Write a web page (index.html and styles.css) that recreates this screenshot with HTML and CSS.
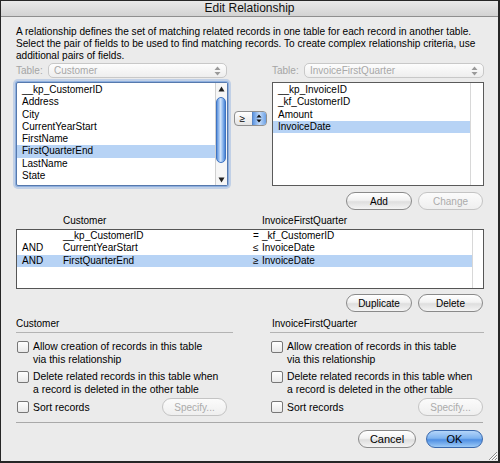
FILE: index.html
```html
<!DOCTYPE html>
<html>
<head>
<meta charset="utf-8">
<title>Edit Relationship</title>
<link rel="stylesheet" href="styles.css">
</head>
<body>
<div class="window">
  <div class="titlebar">Edit Relationship</div>
  <div class="content">
    <p class="intro">A relationship defines the set of matching related records in one table for each record in another table.<br>Select the pair of fields to be used to find matching records. To create complex relationship criteria, use<br>additional pairs of fields.</p>

    <div class="pickers">
      <div class="table-field">
        <span class="label">Table:</span>
        <div class="popup"><span>Customer</span>
          <svg class="updown" width="7" height="10" viewBox="0 0 7 10"><path d="M0.5 4 L3.5 0.5 L6.5 4 Z M0.5 6 L3.5 9.5 L6.5 6 Z" fill="#9a9a9a"/></svg>
        </div>
      </div>
      <div></div>
      <div class="table-field">
        <span class="label">Table:</span>
        <div class="popup wide"><span>InvoiceFirstQuarter</span>
          <svg class="updown" width="7" height="10" viewBox="0 0 7 10"><path d="M0.5 4 L3.5 0.5 L6.5 4 Z M0.5 6 L3.5 9.5 L6.5 6 Z" fill="#9a9a9a"/></svg>
        </div>
      </div>

      <div class="list focused">
        <ul class="items">
          <li>__kp_CustomerID</li>
          <li>Address</li>
          <li>City</li>
          <li>CurrentYearStart</li>
          <li>FirstName</li>
          <li class="sel">FirstQuarterEnd</li>
          <li>LastName</li>
          <li>State</li>
        </ul>
        <div class="scrollbar">
          <div class="sb-arrow"><svg width="7" height="6" viewBox="0 0 7 6"><path d="M0.5 5.5 L3.5 0.5 L6.5 5.5 Z" fill="#222"/></svg></div>
          <div class="sb-track"><div class="sb-thumb"></div></div>
          <div class="sb-arrow"><svg width="7" height="6" viewBox="0 0 7 6"><path d="M0.5 0.5 L3.5 5.5 L6.5 0.5 Z" fill="#222"/></svg></div>
        </div>
      </div>

      <div class="op-cell">
        <div class="op-popup">
          <span class="op">≥</span>
          <span class="op-stepper"><svg width="6" height="9" viewBox="0 0 6 9"><path d="M0.5 3.5 L3 0.5 L5.5 3.5 Z M0.5 5.5 L3 8.5 L5.5 5.5 Z" fill="#111"/></svg></span>
        </div>
      </div>

      <div class="list">
        <ul class="items">
          <li>__kp_InvoiceID</li>
          <li>_kf_CustomerID</li>
          <li>Amount</li>
          <li class="sel">InvoiceDate</li>
        </ul>
        <div class="track-empty"></div>
      </div>
    </div>

    <div class="actions">
      <div class="btn w66">Add</div>
      <div class="btn w65 disabled">Change</div>
    </div>

    <div class="crit-head">
      <span></span>
      <span>Customer</span>
      <span></span>
      <span>InvoiceFirstQuarter</span>
    </div>
    <div class="crit">
      <div class="crit-rows">
        <div class="crit-row"><span></span><span>__kp_CustomerID</span><span>=</span><span>_kf_CustomerID</span></div>
        <div class="crit-row"><span>AND</span><span>CurrentYearStart</span><span>≤</span><span>InvoiceDate</span></div>
        <div class="crit-row sel"><span>AND</span><span>FirstQuarterEnd</span><span>≥</span><span>InvoiceDate</span></div>
      </div>
      <div class="track-empty narrow"></div>
    </div>

    <div class="actions tight">
      <div class="btn w66">Duplicate</div>
      <div class="btn w65">Delete</div>
    </div>

    <div class="options">
      <div class="section">
        <div class="sect-title">Customer</div>
        <div class="check-row first"><span class="cb"></span><span>Allow creation of records in this table<br>via this relationship</span></div>
        <div class="check-row"><span class="cb"></span><span>Delete related records in this table when<br>a record is deleted in the other table</span></div>
        <div class="sort-row">
          <div class="check-row inline"><span class="cb"></span><span>Sort records</span></div>
          <div class="btn w65 disabled spec-left">Specify...</div>
        </div>
      </div>
      <div class="section right">
        <div class="sect-title">InvoiceFirstQuarter</div>
        <div class="check-row first"><span class="cb"></span><span>Allow creation of records in this table<br>via this relationship</span></div>
        <div class="check-row"><span class="cb"></span><span>Delete related records in this table when<br>a record is deleted in the other table</span></div>
        <div class="sort-row">
          <div class="check-row inline"><span class="cb"></span><span>Sort records</span></div>
          <div class="btn w65 disabled spec-right">Specify...</div>
        </div>
      </div>
    </div>

    <div class="separator"></div>

    <div class="footer">
      <div class="btn w58 big">Cancel</div>
      <div class="btn w57 big default">OK</div>
    </div>
  </div>
  <svg class="grip" width="12" height="12" viewBox="0 0 12 12">
    <path d="M11 3 L3 11 M11 6 L6 11 M11 9 L9 11" stroke="#8a8a8a" stroke-width="1"/>
    <path d="M11 4 L4 11 M11 7 L7 11 M11 10 L10 11" stroke="#ffffff" stroke-width="1"/>
  </svg>
</div>
</body>
</html>
```

FILE: styles.css
```css
* { box-sizing: border-box; }
html, body { margin: 0; padding: 0; }
body {
  width: 500px;
  height: 463px;
  overflow: hidden;
  font-family: "Liberation Sans", Arial, sans-serif;
  font-size: 10px;
  color: #000;
  background: #ebebeb;
}
.window {
  position: relative;
  width: 500px;
  height: 463px;
  background: #ebebeb;
  border-style: solid;
  border-color: #262626;
  border-width: 1px 2px 2px 1px;
}
.titlebar {
  height: 16px;
  line-height: 15px;
  text-align: center;
  font-size: 12px;
  color: #111;
  background: linear-gradient(#e9e9e9, #d2d2d2);
  border-bottom: 1px solid #8e8e8e;
}
.content { padding: 0 14px 0 15px; }
.intro {
  margin: 9px 0 0;
  font-size: 10.1px;
  line-height: 12px;
  white-space: nowrap;
}

/* field pickers */
.pickers {
  display: grid;
  grid-template-columns: 212px 44px 212px;
  grid-template-rows: 15px 104px;
  row-gap: 4px;
  margin-top: 1px;
}
.table-field {
  display: flex;
  align-items: center;
  gap: 5px;
  color: #a5a5a5;
}
.table-field .label { width: 27px; white-space: nowrap; }
.popup {
  flex: 1;
  height: 15px;
  margin-right: 1px;
  border: 1px solid #c8c8c8;
  border-radius: 5px;
  background: linear-gradient(#fdfdfd, #eeeeee);
  display: flex;
  align-items: center;
  justify-content: space-between;
  padding: 0 5px;
  color: #a8a8a8;
}
.popup.wide { margin-right: 0; }
.list {
  background: #fff;
  border: 1px solid #5a5a5a;
  display: flex;
}
.list.focused {
  border-color: #5679ad;
  border-radius: 2px;
  box-shadow: 0 0 0 1px #8fb0df, 0 0 0 3px rgba(143, 176, 223, 0.45);
}
.items {
  list-style: none;
  margin: 0;
  padding: 1px 0 0;
  flex: 1;
}
.items li {
  height: 12.3px;
  line-height: 12.3px;
  padding-left: 5px;
  white-space: nowrap;
}
.items li.sel, .crit-row.sel { background: #b7d3f5; }
.scrollbar {
  width: 12px;
  border-left: 1px solid #d0d0d0;
  background: #f6f6f6;
  display: flex;
  flex-direction: column;
}
.sb-arrow {
  height: 11px;
  display: flex;
  align-items: center;
  justify-content: center;
}
.sb-track { flex: 1; padding: 3px 1px 0 0; }
.sb-thumb {
  height: 66px;
  border-radius: 5px;
  border: 1px solid #3f74c2;
  background: linear-gradient(to right, #5b92de, #d3e5fb 45%, #9dc3f2 65%, #4a84d5);
}
.track-empty {
  width: 13px;
  border-left: 1px solid #d8d8d8;
  background: #fff;
}
.track-empty.narrow { width: 11px; }
.op-cell {
  display: flex;
  justify-content: center;
  align-items: flex-start;
  padding-top: 29px;
}
.op-popup {
  width: 33px;
  height: 15px;
  border: 1px solid #8f8f8f;
  border-radius: 4px;
  background: linear-gradient(#ffffff, #e4e4e4);
  display: flex;
  align-items: center;
  overflow: hidden;
}
.op-popup .op { flex: 1; padding-left: 5px; }
.op-stepper {
  width: 14px;
  height: 100%;
  border-left: 1px solid #5a86c4;
  background: linear-gradient(to right, #5e96e2, #c3dbf9 50%, #6aa0e6);
  display: flex;
  align-items: center;
  justify-content: center;
}

/* buttons */
.actions {
  display: flex;
  justify-content: flex-end;
  gap: 6px;
  margin-top: 6px;
  padding-right: 1px;
}
.actions.tight { margin-top: 5px; }
.btn {
  height: 18px;
  border-radius: 9px;
  border: 1px solid #8a8a8a;
  background: linear-gradient(#ffffff 0%, #f2f2f2 45%, #dedede 55%, #f4f4f4 100%);
  display: flex;
  align-items: center;
  justify-content: center;
  white-space: nowrap;
  flex: none;
}
.btn.big { font-size: 11px; }
.btn.disabled {
  border-color: #c4c4c4;
  color: #ababab;
  background: linear-gradient(#fbfbfb, #efefef);
}
.btn.default {
  border-color: #3a69ad;
  background: linear-gradient(#b4d5fa 0%, #7fb4f0 45%, #4f8fe3 55%, #9ccaf7 100%);
}
.w66 { width: 66px; }
.w65 { width: 65px; }
.w58 { width: 58px; }
.w57 { width: 57px; }

/* criteria */
.crit-head {
  display: grid;
  grid-template-columns: 47px 190px 9px 1fr;
  margin-top: 5px;
  line-height: 12px;
}
.crit {
  margin-top: 2px;
  height: 60px;
  border: 1px solid #555;
  background: #fff;
  display: flex;
}
.crit-rows { flex: 1; }
.crit-row {
  display: grid;
  grid-template-columns: 46px 190px 9px 1fr;
  height: 12.4px;
  line-height: 12.4px;
}
.crit-row > span:first-child { padding-left: 5px; }

/* options */
.options {
  display: grid;
  grid-template-columns: 217px 214px;
  column-gap: 37px;
  margin-top: 6px;
}
.sect-title {
  line-height: 12px;
  padding-bottom: 2px;
  border-bottom: 1px solid #b3b3b3;
}
.section.right .sect-title { padding-left: 2px; }
.check-row {
  display: flex;
  align-items: flex-start;
  gap: 4px;
  font-size: 10.4px;
  line-height: 13px;
  margin-top: 4px;
  white-space: nowrap;
}
.check-row.first { margin-top: 7px; }
.cb {
  width: 12px;
  height: 12px;
  margin-left: 1px;
  margin-top: 1px;
  border: 1px solid #777;
  border-radius: 2px;
  background: linear-gradient(#ffffff, #e9e9e9);
  flex: none;
}
.sort-row {
  display: flex;
  justify-content: space-between;
  align-items: center;
  height: 18px;
  margin-top: 2px;
}
.check-row.inline { margin-top: 0; align-items: center; }
.check-row.inline .cb { margin-top: 0; }
.spec-left { margin-right: 6px; }
.spec-right { margin-right: 1px; }

.separator {
  margin-top: 6px;
  margin-right: 1px;
  border-top: 1px solid #a9a9a9;
}
.footer {
  display: flex;
  justify-content: flex-end;
  gap: 10px;
  margin-top: 7px;
  padding-right: 1px;
}
.grip {
  position: absolute;
  right: 0;
  bottom: 0;
}
```
